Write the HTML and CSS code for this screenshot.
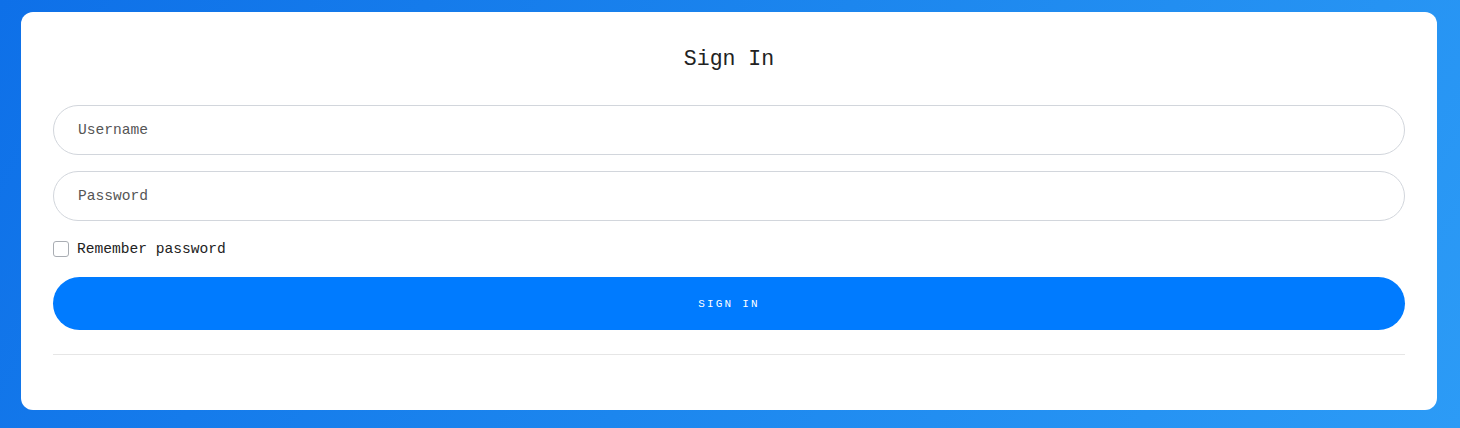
FILE: index.html
```html
<!DOCTYPE html>
<html>
<head>
<meta charset="utf-8">
<link rel="stylesheet" href="styles.css">
</head>
<body>
<div class="card">
  <h1 class="title">Sign In</h1>
  <form class="form">
    <input class="field" type="text" placeholder="Username">
    <input class="field" type="password" placeholder="Password">
    <label class="remember"><span class="box"></span><span>Remember password</span></label>
    <button class="btn" type="button">SIGN IN</button>
  </form>
  <hr class="rule">
</div>
</body>
</html>
```
FILE: styles.css
```css
html, body { margin: 0; height: 100%; }
body {
  background: linear-gradient(120deg, #0e70e8 0%, #1c86ee 50%, #2c9bf6 100%);
  padding: 12px 23px 0 21px;
  box-sizing: border-box;
  font-family: "Liberation Mono", "DejaVu Sans Mono", monospace;
  color: #212529;
}
.card {
  background: #fff;
  border-radius: 12px;
  padding: 33px 32px 55px;
  height: 398px;
  box-sizing: border-box;
}
.title {
  margin: 0 0 32px;
  text-align: center;
  font-size: 21.5px;
  font-weight: normal;
  line-height: 28px;
  color: #222;
}
.form { display: flex; flex-direction: column; }
.field {
  height: 50px;
  border: 1px solid #d2d6dc;
  border-radius: 25px;
  padding: 0 24px;
  box-sizing: border-box;
  font-family: inherit;
  font-size: 14.6px;
  margin-bottom: 16px;
  outline: none;
}
.field::placeholder { color: #555; }
.remember {
  display: flex;
  align-items: center;
  gap: 8px;
  font-size: 14.6px;
  color: #222;
  height: 22px;
  margin-top: 1px;
  margin-bottom: 17px;
}
.box {
  width: 14px; height: 14px;
  border: 1px solid #a9adb3;
  border-radius: 3px;
  display: inline-block;
}
.btn {
  height: 53px;
  border: 0;
  border-radius: 27px;
  background: #007bff;
  color: #fff;
  font-family: inherit;
  font-size: 11px;
  letter-spacing: 2.2px;
}
.rule {
  border: 0;
  border-top: 1px solid #e6e6e6;
  margin: 24px 0 0;
}
```
